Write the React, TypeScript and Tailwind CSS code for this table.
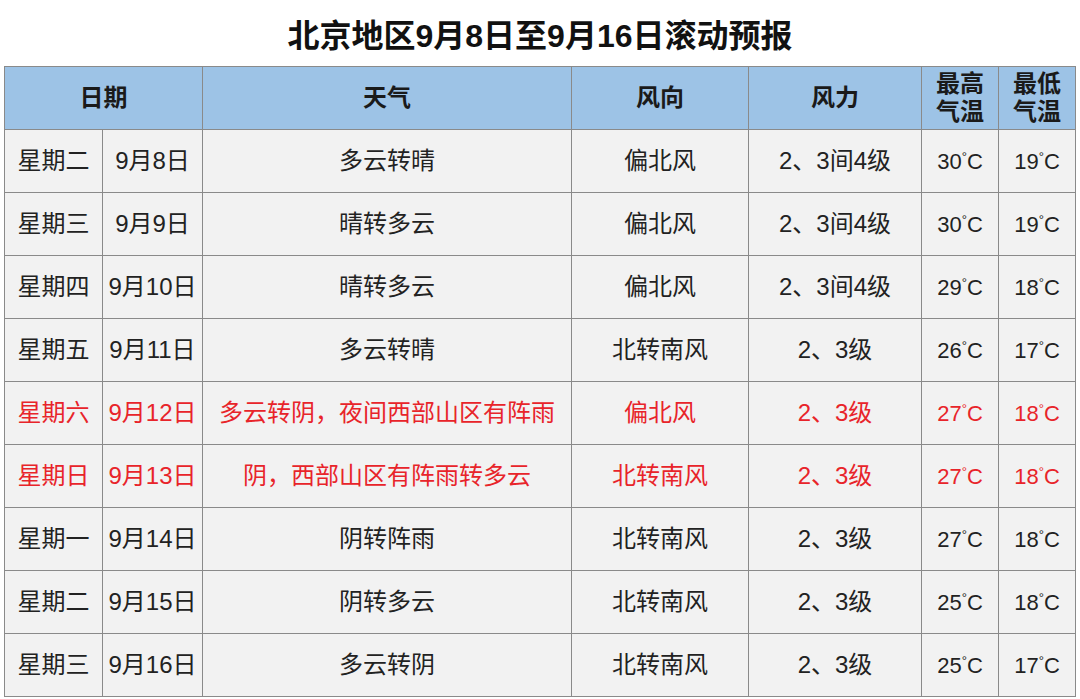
const rows = [
  { day: "星期二", date: "9月8日", weather: "多云转晴", dir: "偏北风", force: "2、3间4级", hi: "30", lo: "19" },
  { day: "星期三", date: "9月9日", weather: "晴转多云", dir: "偏北风", force: "2、3间4级", hi: "30", lo: "19" },
  { day: "星期四", date: "9月10日", weather: "晴转多云", dir: "偏北风", force: "2、3间4级", hi: "29", lo: "18" },
  { day: "星期五", date: "9月11日", weather: "多云转晴", dir: "北转南风", force: "2、3级", hi: "26", lo: "17" },
  { day: "星期六", date: "9月12日", weather: "多云转阴，夜间西部山区有阵雨", dir: "偏北风", force: "2、3级", hi: "27", lo: "18", red: true },
  { day: "星期日", date: "9月13日", weather: "阴，西部山区有阵雨转多云", dir: "北转南风", force: "2、3级", hi: "27", lo: "18", red: true },
  { day: "星期一", date: "9月14日", weather: "阴转阵雨", dir: "北转南风", force: "2、3级", hi: "27", lo: "18" },
  { day: "星期二", date: "9月15日", weather: "阴转多云", dir: "北转南风", force: "2、3级", hi: "25", lo: "18" },
  { day: "星期三", date: "9月16日", weather: "多云转阴", dir: "北转南风", force: "2、3级", hi: "25", lo: "17" },
];

const font = { fontFamily: '"Liberation Sans", "Noto Sans CJK SC", sans-serif' };

function Temp({ v }: { v: string }) {
  return (
    <span className="text-[22px]">
      {v}
      <span className="text-[13px] align-[8px]">°</span>C
    </span>
  );
}

export default function App() {
  const td = "border border-[#8a8a8a] h-[63px] text-center p-0";
  const th = "border border-[#8a8a8a] text-center p-0 font-bold";
  return (
    <div className="w-[1080px] h-[699px] bg-white overflow-hidden" style={font}>
      <h1 className="h-[66px] pt-[14px] text-center text-[32px] font-bold leading-[44px] text-[#111]">
        北京地区9月8日至9月16日滚动预报
      </h1>
      <table className="ml-[4px] border-collapse table-fixed w-[1071px] text-[24px]">
        <colgroup>
          <col className="w-[98px]" />
          <col className="w-[100px]" />
          <col className="w-[369px]" />
          <col className="w-[177px]" />
          <col className="w-[173px]" />
          <col className="w-[77px]" />
          <col className="w-[77px]" />
        </colgroup>
        <thead>
          <tr className="bg-[#9dc3e6] h-[63px] text-[#1a1a1a]">
            <th colSpan={2} className={th}>日期</th>
            <th className={th}>天气</th>
            <th className={th}>风向</th>
            <th className={th}>风力</th>
            <th className={`${th} leading-[28px]`}>最高<br />气温</th>
            <th className={`${th} leading-[28px]`}>最低<br />气温</th>
          </tr>
        </thead>
        <tbody>
          {rows.map((r, i) => (
            <tr key={i} className={`bg-[#f2f2f2] ${r.red ? "text-[#e8242a]" : "text-[#222]"}`}>
              <td className={td}>{r.day}</td>
              <td className={td}>{r.date}</td>
              <td className={td}>{r.weather}</td>
              <td className={td}>{r.dir}</td>
              <td className={td}>{r.force}</td>
              <td className={td}><Temp v={r.hi} /></td>
              <td className={td}><Temp v={r.lo} /></td>
            </tr>
          ))}
        </tbody>
      </table>
    </div>
  );
}
